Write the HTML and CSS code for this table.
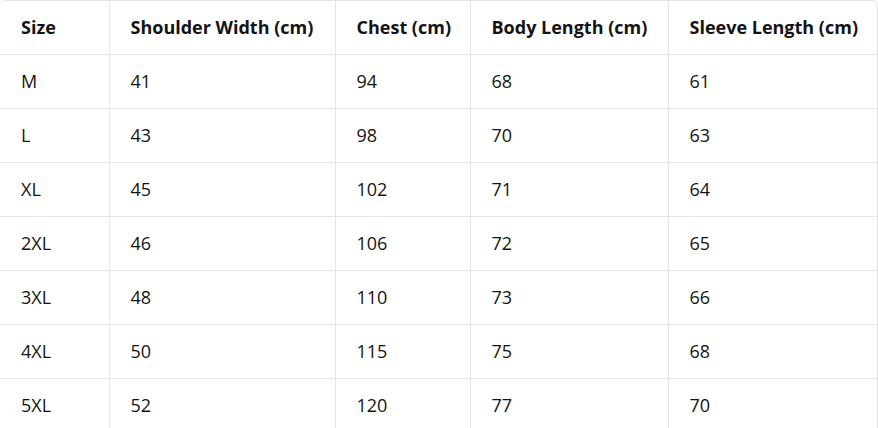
FILE: index.html
```html
<!DOCTYPE html>
<html>
<head>
<meta charset="utf-8">
<link rel="stylesheet" href="styles.css">
</head>
<body>
<div class="wrap">
<table class="size-table">
<colgroup>
<col class="c1"><col class="c2"><col class="c3"><col class="c4"><col class="c5">
</colgroup>
<thead>
<tr><th>Size</th><th>Shoulder Width (cm)</th><th>Chest (cm)</th><th>Body Length (cm)</th><th>Sleeve Length (cm)</th></tr>
</thead>
<tbody>
<tr><td>M</td><td>41</td><td>94</td><td>68</td><td>61</td></tr>
<tr><td>L</td><td>43</td><td>98</td><td>70</td><td>63</td></tr>
<tr><td>XL</td><td>45</td><td>102</td><td>71</td><td>64</td></tr>
<tr><td>2XL</td><td>46</td><td>106</td><td>72</td><td>65</td></tr>
<tr><td>3XL</td><td>48</td><td>110</td><td>73</td><td>66</td></tr>
<tr><td>4XL</td><td>50</td><td>115</td><td>75</td><td>68</td></tr>
<tr><td>5XL</td><td>52</td><td>120</td><td>77</td><td>70</td></tr>
</tbody>
</table>
</div>
</body>
</html>
```

FILE: styles.css
```css
html, body {
  margin: 0;
  padding: 0;
  background: #fff;
}
body {
  font-family: "Open Sans", "Noto Sans", sans-serif;
  color: #141414;
  overflow: hidden;
}
.wrap {
  width: 878px;
  box-sizing: border-box;
  border-top: 1px solid #e6e6e6;
  border-right: 1px solid #e6e6e6;
  border-top-right-radius: 6px;
  border-top-left-radius: 6px;
  overflow: hidden;
}
.size-table {
  width: 877px;
  border-collapse: collapse;
  table-layout: fixed;
}
.c1 { width: 109px; }
.c2 { width: 226px; }
.c3 { width: 135px; }
.c4 { width: 198px; }
.c5 { width: 209px; }
.size-table th,
.size-table td {
  height: 54px;
  box-sizing: border-box;
  padding: 0 0 0 21px;
  text-align: left;
  vertical-align: middle;
  font-size: 18px;
  border-bottom: 1px solid #e6e6e6;
  border-right: 1px solid #e6e6e6;
  white-space: nowrap;
}
.size-table th:last-child,
.size-table td:last-child {
  border-right: none;
}
.size-table th {
  font-weight: 700;
  height: 53px;
}
```
